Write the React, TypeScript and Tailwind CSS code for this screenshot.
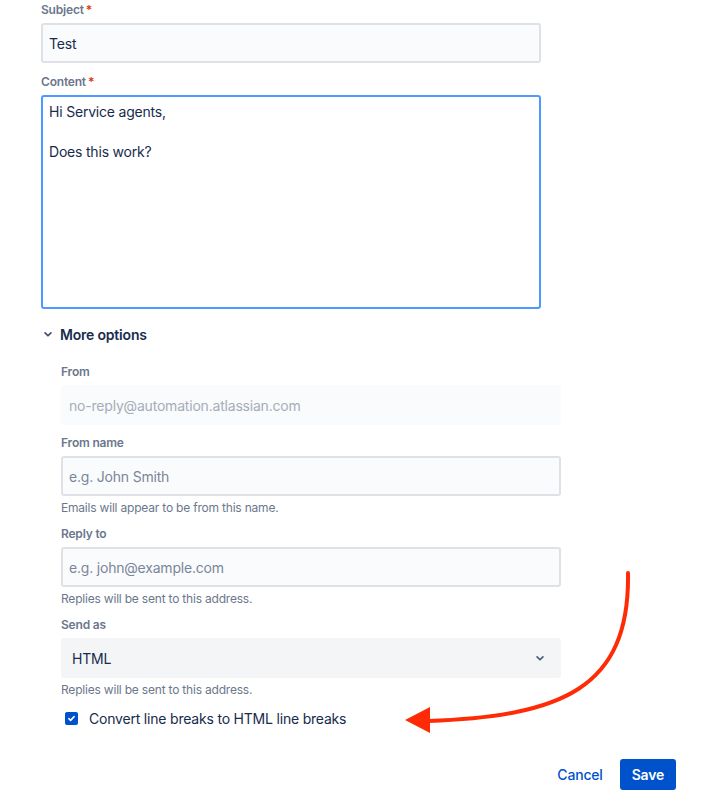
import { useState } from 'react'

function Label({ text, required }: { text: string; required?: boolean }) {
    return (
        <div className="h-4 text-[12px] leading-4 font-semibold text-[#6B778C]">
            {text}
            {required && <span className="text-[#DE350B] ml-[2px]">*</span>}
        </div>
    )
}

function Helper({ text }: { text: string }) {
    return <div className="mt-1 h-4 text-[12px] leading-4 text-[#6B778C]">{text}</div>
}

function ChevronDown({ className }: { className?: string }) {
    return (
        <svg viewBox="0 0 24 24" className={className} fill="none" stroke="currentColor" strokeWidth="3" strokeLinecap="round" strokeLinejoin="round">
            <path d="M7 10l5 5 5-5" />
        </svg>
    )
}

export default function App() {
    const [subject, setSubject] = useState('Test')
    const [content, setContent] = useState('Hi Service agents,\n\nDoes this work?')
    const [convert, setConvert] = useState(true)

    return (
        <div className="relative min-h-[804px] w-[702px] bg-white pl-[41px] pr-[26px] text-[14px] tracking-[-0.2px] text-[#172B4D]" style={{ fontFamily: 'Inter, "Noto Sans", sans-serif' }}>
            <div className="pt-[2px]">
                <Label text="Subject" required />
                <input
                    value={subject}
                    onChange={(e) => setSubject(e.target.value)}
                    className="mt-[5px] block h-10 w-[500px] rounded-[3px] border-2 border-[#DFE1E6] bg-[#FAFBFC] px-[6px] text-[14px] tracking-[-0.2px] text-[#172B4D] outline-none"
                />
            </div>

            <div className="mt-[11px]">
                <Label text="Content" required />
                <textarea
                    value={content}
                    onChange={(e) => setContent(e.target.value)}
                    className="mt-[5px] block h-[214px] w-[500px] resize-none rounded-[3px] border-2 border-[#4C9AFF] bg-white px-[6px] pt-[5px] text-[14px] leading-5 tracking-[-0.2px] text-[#172B4D] outline-none"
                />
            </div>

            <button className="mt-[13px] flex h-6 items-center gap-[5px] text-[14px] font-semibold tracking-[-0.2px] text-[#172B4D]">
                <ChevronDown className="h-[14px] w-[14px] text-[#42526E]" />
                <span>More options</span>
            </button>

            <div className="pl-5">
                <div className="mt-[18px]">
                    <Label text="From" />
                    <div className="mt-[5px] flex h-10 w-[500px] items-center rounded-[3px] bg-[#FAFBFC] px-2 text-[14px] text-[#A5ADBA]">
                        no-reply@automation.atlassian.com
                    </div>
                </div>

                <div className="mt-[10px]">
                    <Label text="From name" />
                    <input
                        placeholder="e.g. John Smith"
                        className="mt-[5px] block h-10 w-[500px] rounded-[3px] border-2 border-[#DFE1E6] bg-[#FAFBFC] px-[6px] text-[14px] tracking-[-0.2px] text-[#172B4D] outline-none placeholder:text-[#7A869A]"
                    />
                    <Helper text="Emails will appear to be from this name." />
                </div>

                <div className="mt-[10px]">
                    <Label text="Reply to" />
                    <input
                        placeholder="e.g. john@example.com"
                        className="mt-[5px] block h-10 w-[500px] rounded-[3px] border-2 border-[#DFE1E6] bg-[#FAFBFC] px-[6px] text-[14px] tracking-[-0.2px] text-[#172B4D] outline-none placeholder:text-[#7A869A]"
                    />
                    <Helper text="Replies will be sent to this address." />
                </div>

                <div className="mt-[10px]">
                    <Label text="Send as" />
                    <div className="mt-[5px] flex h-10 w-[500px] items-center justify-between rounded-[3px] bg-[#F4F5F7] pl-[11px] pr-[14px] text-[14px] text-[#172B4D]">
                        <span>HTML</span>
                        <ChevronDown className="h-[14px] w-[14px] text-[#505F79]" />
                    </div>
                    <Helper text="Replies will be sent to this address." />
                </div>

                <label className="mt-[10px] flex h-5 cursor-pointer items-center gap-[11px] pl-1">
                    <span
                        onClick={() => setConvert(!convert)}
                        className={`flex h-[13px] w-[13px] items-center justify-center rounded-[2px] ${convert ? 'bg-[#0052CC]' : 'border-2 border-[#DFE1E6] bg-[#FAFBFC]'}`}
                    >
                        {convert && (
                            <svg viewBox="0 0 12 12" className="h-[9px] w-[9px]" fill="none" stroke="white" strokeWidth="2" strokeLinecap="round" strokeLinejoin="round">
                                <path d="M2.5 6.2l2.3 2.3 4.7-5" />
                            </svg>
                        )}
                    </span>
                    <span className="text-[14px] text-[#172B4D]">Convert line breaks to HTML line breaks</span>
                </label>
            </div>

            <div className="mt-[30px] flex items-center justify-end gap-[7px]">
                <button className="h-8 rounded-[3px] px-[10px] text-[14px] font-medium tracking-[-0.2px] text-[#0052CC]">Cancel</button>
                <button className="h-[31px] rounded-[3px] bg-[#0052CC] px-3 text-[14px] font-semibold tracking-[-0.2px] text-white">Save</button>
            </div>

            <svg className="pointer-events-none absolute left-0 top-0" width="702" height="804" viewBox="0 0 702 804">
                <path d="M628 573 C630 690 560 716 428 721" fill="none" stroke="#FF2A06" strokeWidth="4" strokeLinecap="round" />
                <polygon points="405,720 430,707 430,733" fill="#FF2A06" />
            </svg>
        </div>
    )
}
